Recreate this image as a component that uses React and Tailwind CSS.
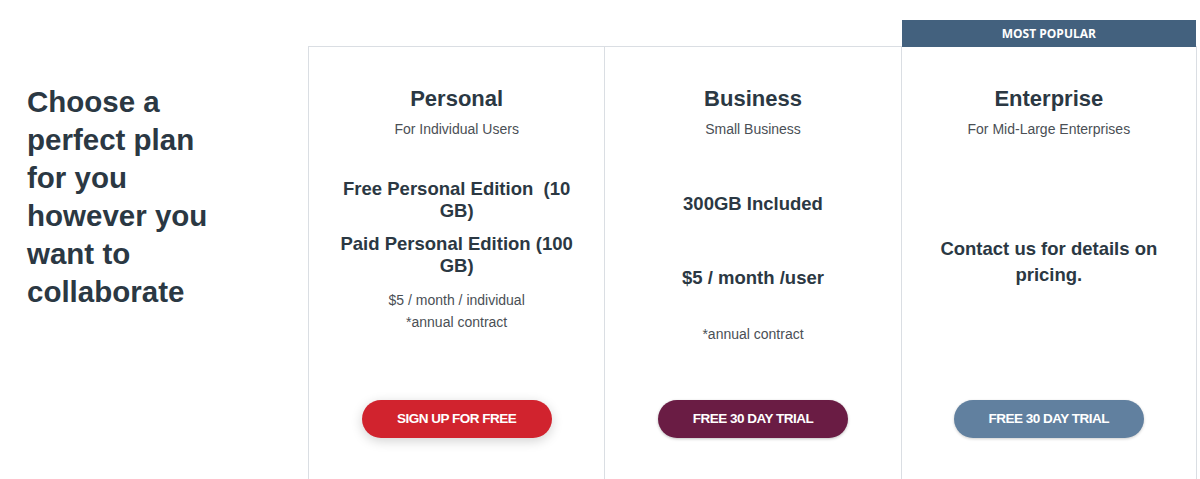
import React from "react";

const plans = [
  {
    name: "Personal",
    tagline: "For Individual Users",
    button: "SIGN UP FOR FREE",
    buttonClass: "bg-[#d1232e] shadow-[0_3px_12px_rgba(0,0,0,0.18)]",
  },
  {
    name: "Business",
    tagline: "Small Business",
    button: "FREE 30 DAY TRIAL",
    buttonClass: "bg-[#6a1c44] shadow-[0_1px_3px_rgba(0,0,0,0.25)]",
  },
  {
    name: "Enterprise",
    tagline: "For Mid-Large Enterprises",
    button: "FREE 30 DAY TRIAL",
    buttonClass: "bg-[#61809f] shadow-[0_1px_3px_rgba(0,0,0,0.2)]",
    popular: true,
  },
];

function PlanBody({ name }) {
  if (name === "Personal") {
    return (
      <div className="flex flex-col items-center">
        <p className="mt-[40px] text-[18.5px] leading-[22px] font-bold text-[#2b3843]">
          Free Personal Edition{"\u00a0"} (10 GB)
        </p>
        <p className="mt-[11px] text-[18.5px] leading-[22px] font-bold text-[#2b3843]">
          Paid Personal Edition (100 GB)
        </p>
        <p className="mt-[12px] text-[14px] leading-[22px] text-[#4a4f55]">
          $5 / month / individual
        </p>
        <p className="text-[14px] leading-[22px] text-[#4a4f55]">
          *annual contract
        </p>
      </div>
    );
  }
  if (name === "Business") {
    return (
      <div className="flex flex-col items-center">
        <p className="mt-[55px] text-[18.5px] leading-[22px] font-bold text-[#2b3843]">
          300GB Included
        </p>
        <p className="mt-[52px] text-[18.5px] leading-[22px] font-bold text-[#2b3843]">
          $5 / month /user
        </p>
        <p className="mt-[34px] text-[14px] leading-[22px] text-[#4a4f55]">
          *annual contract
        </p>
      </div>
    );
  }
  return (
    <div className="flex flex-col items-center">
      <p className="mt-[98px] text-[18.5px] leading-[26px] font-bold text-[#2b3843]">
        Contact us for details on pricing.
      </p>
    </div>
  );
}

function PlanCard({ plan, last }) {
  return (
    <div
      className={`relative flex h-[440px] flex-col items-center border-t border-l border-[#dadee3] px-[26px] pt-[39px] text-center ${
        last ? "border-r" : ""
      }`}
    >
      {plan.popular && (
        <div className="absolute -top-[27px] left-0 right-0 flex h-[27px] items-center justify-center bg-[#43617e] font-['Open_Sans',sans-serif] text-[12px] font-bold text-white">
          MOST POPULAR
        </div>
      )}
      <h2 className="text-[22px] leading-[26px] font-bold text-[#2b3843]">
        {plan.name}
      </h2>
      <p className="mt-[8px] text-[14px] leading-[18px] text-[#4a4f55]">
        {plan.tagline}
      </p>

      <div className="h-[262px] w-full">
        <PlanBody name={plan.name} />
      </div>

      <button
        className={`h-[38px] w-[190px] rounded-full text-[13.5px] font-bold tracking-[-0.5px] text-white ${plan.buttonClass}`}
      >
        {plan.button}
      </button>
    </div>
  );
}

export default function App() {
  return (
    <div className="h-[479px] w-full overflow-hidden bg-white font-['Liberation_Sans',Arial,sans-serif]">
      <div className="flex pt-[46px]">
        {/* Intro */}
        <div className="w-[308px] shrink-0 pl-[27px] pt-[37px]">
          <h1 className="w-[200px] text-[29.5px] leading-[38px] font-bold text-[#2b3843]">
            Choose a perfect plan for you however you want to collaborate
          </h1>
        </div>

        {/* Plans */}
        <div className="grid w-[889px] grid-cols-3">
          {plans.map((plan, i) => (
            <PlanCard key={plan.name} plan={plan} last={i === plans.length - 1} />
          ))}
        </div>
      </div>
    </div>
  );
}
